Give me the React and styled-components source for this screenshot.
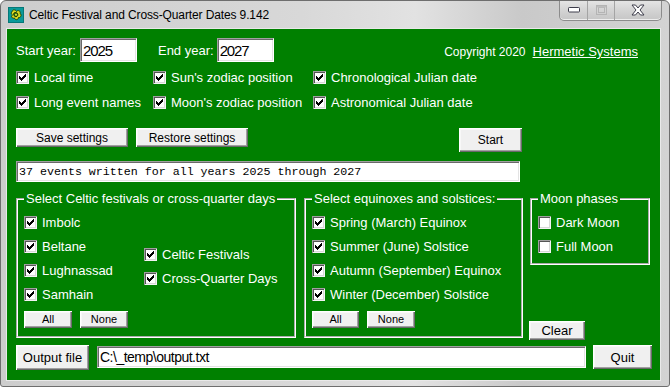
import React from 'react';
import styled, { createGlobalStyle } from 'styled-components';

const GlobalStyle = createGlobalStyle`
  html, body { margin: 0; padding: 0; background: #ffffff; }
  body { font-family: "Liberation Sans", Arial, sans-serif; }
  * { box-sizing: border-box; }
`;

const SANS = `"Liberation Sans", Arial, sans-serif`;

const Window = styled.div`
  width: 670px;
  height: 387px;
  border: 1px solid #6e6e6e;
  border-radius: 6px 6px 3px 3px;
  background: linear-gradient(90deg, #cdcdcd 0%, #d8d8d8 45%, #e2e2e2 62%, #c9c9c9 78%, #d3d3d3 100%);
  padding: 0 9px 6px 6px;
  display: flex;
  flex-direction: column;
  overflow: hidden;
`;

const TitleBar = styled.div`
  height: 28px;
  flex: none;
  display: flex;
  align-items: center;
`;

const AppIcon = styled.svg`
  width: 16px;
  height: 16px;
  margin-left: 1px;
  flex: none;
`;

const TitleText = styled.span`
  margin-left: 5px;
  font-family: ${SANS};
  font-size: 12px;
  letter-spacing: -0.12px;
  color: #000;
`;

const Controls = styled.div`
  margin-left: auto;
  margin-right: -2px;
  margin-top: -1px;
  align-self: flex-start;
  display: flex;
  height: 21px;
  border: 1px solid #8c8c8c;
  border-top: none;
  border-radius: 0 0 5px 5px;
  overflow: hidden;
  background: linear-gradient(180deg, #e6e6e6 0%, #d4d4d4 50%, #c6c6c6 100%);
  box-shadow: inset 0 -1px 0 #eeeeee;
`;

const CtrlBtn = styled.div`
  width: ${p => p.$w}px;
  display: flex;
  align-items: center;
  justify-content: center;
  border-left: ${p => (p.$first ? 'none' : '1px solid #a4a4a4')};
`;

const Client = styled.div`
  flex: 1;
  background: #008000;
  padding: 9px 0 0 9px;
  display: flex;
  flex-direction: column;
  color: #fff;
  box-shadow: 0 0 0 1px #e9e9e9;
`;

const TopRow = styled.div`
  height: 24px;
  display: flex;
  align-items: center;
  font-size: 13px;
`;

const FieldLabel = styled.span`
  margin-left: ${p => p.$ml || 0}px;
  font-family: ${SANS};
  font-size: 13px;
  color: #fff;
`;

const TextBox = styled.div`
  width: ${p => p.$w}px;
  height: ${p => p.$h}px;
  margin-left: ${p => p.$ml || 0}px;
  background: #fff;
  color: #000;
  border: 1px solid;
  border-color: #a0a0a0 #ffffff #ffffff #a0a0a0;
  box-shadow: inset 1px 1px 0 #696969, inset -1px -1px 0 #e3e3e3;
  display: flex;
  align-items: center;
  padding-left: 2px;
  font-family: ${SANS};
  font-size: ${p => p.$fs || 13}px;
  letter-spacing: ${p => p.$ls || 0}px;
  white-space: nowrap;
  overflow: hidden;
`;

const MonoBox = styled(TextBox)`
  font-family: "Liberation Mono", "Courier New", monospace;
  font-weight: normal;
  font-size: 11.65px;
  letter-spacing: 0;
  padding-left: 2px;
`;

const Copyright = styled.span`
  margin-left: auto;
  padding-top: 3px;
  font-family: ${SANS};
  font-size: 12px;
  color: #fff;
`;

const Link = styled.span`
  margin-left: 7px;
  margin-right: 22px;
  padding-top: 3px;
  font-family: ${SANS};
  font-size: 13px;
  color: #fff;
  text-decoration: underline;
`;

const OptionGrid = styled.div`
  margin-top: 3px;
  display: grid;
  grid-template-columns: 137px 160px auto;
  grid-auto-rows: 25px;
`;

const CheckRow = styled.div`
  display: flex;
  align-items: center;
  height: ${p => p.$h || 24}px;
  font-family: ${SANS};
  font-size: 13px;
  color: #fff;
  white-space: nowrap;
`;

const Box = styled.span`
  width: 13px;
  height: 13px;
  flex: none;
  margin-right: 5px;
  background: #fff;
  box-shadow: inset 1px 1px 0 #a0a0a0, inset -1px -1px 0 #f4f4f4, inset 2px 2px 0 #555555, inset -2px -2px 0 #d8d8d8;
  display: flex;
  align-items: center;
  justify-content: center;
`;

const CheckSvg = styled.svg`
  width: 7px;
  height: 7px;
  display: block;
`;

const CHECK_PATH =
  'M6 0h1v1h-1z M5 1h2v1h-2z M0 2h1v1h-1z M4 2h3v1h-3z M0 3h2v1h-2z M3 3h3v1h-3z M0 4h5v1h-5z M1 5h3v1h-3z M2 6h1v1h-1z';

const Check = ({ label, checked = true, h }) => (
  <CheckRow $h={h}>
    <Box>
      {checked && (
        <CheckSvg viewBox="0 0 7 7" shapeRendering="crispEdges">
          <path d={CHECK_PATH} fill="#000" />
        </CheckSvg>
      )}
    </Box>
    {label}
  </CheckRow>
);

const Button = styled.button`
  width: ${p => p.$w}px;
  height: ${p => p.$h}px;
  margin-left: ${p => p.$ml || 0}px;
  flex: none;
  padding: 0;
  border: none;
  background: #f0f0f0;
  color: #000;
  font-family: ${SANS};
  font-size: ${p => p.$fs || 12}px;
  line-height: 1;
  box-shadow: inset 1px 1px 0 #ffffff, inset -1px -1px 0 #696969, inset -2px -2px 0 #a0a0a0, inset 2px 2px 0 #f8f8f8;
`;

const ButtonRow = styled.div`
  margin-top: 13px;
  height: 24px;
  display: flex;
  align-items: flex-start;
`;

const StatusRow = styled.div`
  margin-top: 9px;
  display: flex;
`;

const GroupRow = styled.div`
  margin-top: 9px;
  height: 149px;
  display: flex;
  align-items: flex-start;
`;

const Group = styled.fieldset`
  margin: 0 0 0 ${p => p.$ml || 0}px;
  width: ${p => p.$w}px;
  height: ${p => p.$h}px;
  min-width: 0;
  flex: none;
  border: 2px groove #ffffff;
  padding: 4px 0 0 6px;
`;

const Legend = styled.legend`
  padding: 0 2px;
  margin: 0;
  font-family: ${SANS};
  font-size: 13px;
  line-height: 15px;
  color: #fff;
  white-space: nowrap;
`;

const CelticBody = styled.div`
  display: grid;
  grid-template-columns: 120px auto;
`;

const Column = styled.div`
  display: flex;
  flex-direction: column;
  margin-top: ${p => p.$mt || 0}px;
`;

const PairRow = styled.div`
  margin-top: 5px;
  display: flex;
  gap: 8px;
`;

const MoonColumn = styled.div`
  margin-left: 7px;
  width: 120px;
  height: 149px;
  display: flex;
  flex-direction: column;
  justify-content: space-between;
  align-items: flex-start;
`;

const BottomRow = styled.div`
  margin-top: 5px;
  display: flex;
  align-items: flex-start;
`;

const AppLogo = () => (
  <AppIcon viewBox="0 0 16 16">
    <rect x="0" y="0" width="16" height="16" fill="#0a9a9a" />
    <rect x="0.5" y="0.5" width="15" height="15" fill="none" stroke="#067878" />
    <path d="M4 5 C4 2.5 7.5 2 8.5 4.5 C10 2.5 13 4 12 6.5 C14 7.5 13 11 10.5 10.5 C10.5 13 7 13.5 6.5 11 C4 12 2.5 9 4.5 8 C2.8 7 3 5.5 4 5 Z" fill="#d8d820" stroke="#1a3a00" strokeWidth="0.9" />
    <path d="M6 6 C7 5 9.5 5.5 9.8 7.2 C10.2 9 8.3 10.3 7 9.5 C5.5 8.6 5.3 7 6 6 Z" fill="#2f7a10" stroke="#102000" strokeWidth="0.8" />
    <circle cx="8" cy="7.7" r="1" fill="#e8e830" />
  </AppIcon>
);

const MinGlyph = () => (
  <svg width="12" height="6" viewBox="0 0 12 6">
    <rect x="0.5" y="0.5" width="11" height="4.5" rx="0.8" fill="#ffffff" stroke="#3c3c4a" />
  </svg>
);

const MaxGlyph = () => (
  <svg width="11" height="10" viewBox="0 0 11 10">
    <rect x="0.5" y="0.5" width="10" height="9" fill="none" stroke="#b4b4b4" />
    <rect x="2.5" y="2.5" width="6" height="5" fill="none" stroke="#b4b4b4" />
    <rect x="1" y="1" width="9" height="1.5" fill="#bdbdbd" />
  </svg>
);

const CloseGlyph = () => (
  <svg width="14" height="12" viewBox="0 0 14 12">
    <path d="M1 1 H4.5 L7 4 L9.5 1 H13 L9 6 L13 11 H9.5 L7 8 L4.5 11 H1 L5 6 Z" fill="#ffffff" stroke="#3c3c4a" strokeWidth="1" strokeLinejoin="round" />
  </svg>
);

export default function App() {
  return (
    <>
      <GlobalStyle />
      <Window>
        <TitleBar>
          <AppLogo />
          <TitleText>Celtic Festival and Cross-Quarter Dates 9.142</TitleText>
          <Controls>
            <CtrlBtn $w={27} $first><MinGlyph /></CtrlBtn>
            <CtrlBtn $w={27}><MaxGlyph /></CtrlBtn>
            <CtrlBtn $w={47}><CloseGlyph /></CtrlBtn>
          </Controls>
        </TitleBar>
        <Client>
          <TopRow>
            <FieldLabel>Start year:</FieldLabel>
            <TextBox $w={57} $h={24} $ml={4} $fs={15} $ls={-1.1}>2025</TextBox>
            <FieldLabel $ml={21}>End year:</FieldLabel>
            <TextBox $w={57} $h={24} $ml={3} $fs={15} $ls={-1.1}>2027</TextBox>
            <Copyright>Copyright 2020</Copyright>
            <Link>Hermetic Systems</Link>
          </TopRow>

          <OptionGrid>
            <Check label="Local time" h={25} />
            <Check label="Sun's zodiac position" h={25} />
            <Check label="Chronological Julian date" h={25} />
            <Check label="Long event names" h={25} />
            <Check label="Moon's zodiac position" h={25} />
            <Check label="Astronomical Julian date" h={25} />
          </OptionGrid>

          <ButtonRow>
            <Button $w={112} $h={19}>Save settings</Button>
            <Button $w={112} $h={19} $ml={8}>Restore settings</Button>
            <Button $w={63} $h={24} $ml={211}>Start</Button>
          </ButtonRow>

          <StatusRow>
            <MonoBox $w={504} $h={21}>37 events written for all years 2025 through 2027</MonoBox>
          </StatusRow>

          <GroupRow>
            <Group $w={280} $h={147}>
              <Legend>Select Celtic festivals or cross-quarter days</Legend>
              <CelticBody>
                <Column>
                  <Check label="Imbolc" />
                  <Check label="Beltane" />
                  <Check label="Lughnassad" />
                  <Check label="Samhain" />
                  <PairRow>
                    <Button $w={48} $h={17} $fs={11}>All</Button>
                    <Button $w={48} $h={17} $fs={11}>None</Button>
                  </PairRow>
                </Column>
                <Column $mt={32}>
                  <Check label="Celtic Festivals" />
                  <Check label="Cross-Quarter Days" />
                </Column>
              </CelticBody>
            </Group>

            <Group $w={219} $h={147} $ml={8}>
              <Legend>Select equinoxes and solstices: </Legend>
              <Column>
                <Check label="Spring (March) Equinox" />
                <Check label="Summer (June) Solstice" />
                <Check label="Autumn (September) Equinox" />
                <Check label="Winter (December) Solstice" />
                <PairRow>
                  <Button $w={47} $h={17} $fs={11}>All</Button>
                  <Button $w={48} $h={17} $fs={11}>None</Button>
                </PairRow>
              </Column>
            </Group>

            <MoonColumn>
              <Group $w={120} $h={74}>
                <Legend>Moon phases</Legend>
                <Column>
                  <Check label="Dark Moon" checked={false} />
                  <Check label="Full Moon" checked={false} />
                </Column>
              </Group>
              <Button $w={56} $h={19} $fs={13} $ml={-1}>Clear</Button>
            </MoonColumn>
          </GroupRow>

          <BottomRow>
            <Button $w={73} $h={25} $fs={13}>Output file</Button>
            <TextBox $w={489} $h={22} $ml={8} $fs={14} $ls={-0.5} style={{ marginTop: 1 }}>C:\_temp\output.txt</TextBox>
            <Button $w={59} $h={24} $ml={7} $fs={13}>Quit</Button>
          </BottomRow>
        </Client>
      </Window>
    </>
  );
}
